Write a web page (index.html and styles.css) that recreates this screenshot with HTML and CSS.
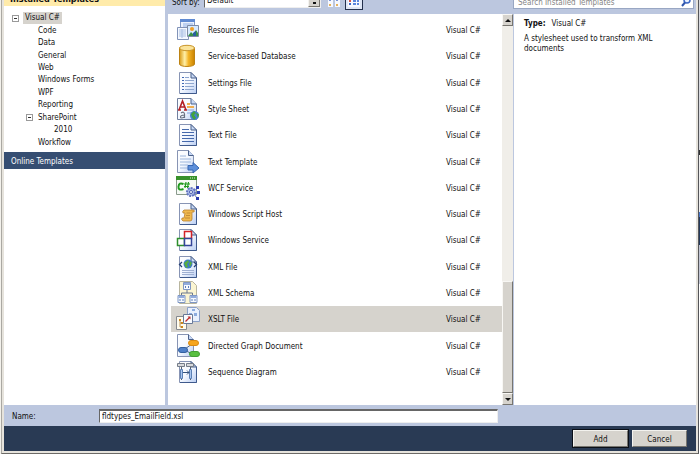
FILE: index.html
```html
<!DOCTYPE html>
<html lang="en">
<head>
<meta charset="utf-8">
<title>Add New Item</title>
<link rel="stylesheet" href="styles.css">
</head>
<body>
<svg class="defs" aria-hidden="true">
  <defs>
    <linearGradient id="paper" x1="0" y1="0" x2="1" y2="1"><stop offset="0" stop-color="#fff"/><stop offset=".5" stop-color="#f4f8ff"/><stop offset="1" stop-color="#b9cdf2"/></linearGradient>
    <linearGradient id="gold" x1="0" x2="1"><stop offset="0" stop-color="#d99a16"/><stop offset=".35" stop-color="#fff0a8"/><stop offset=".6" stop-color="#f3b428"/><stop offset="1" stop-color="#c98200"/></linearGradient>
    <symbol id="doc" viewBox="0 0 24 24"><path d="M3.5 1.5H15L20.500 7V22.500H3.500Z" fill="url(#paper)" stroke="#8794b4"/><path d="M20.500 7V22.500H4" fill="none" stroke="#3f5a8c"/><path d="M15 1.500V7h5.500Z" fill="#c7d8f5" stroke="#4a6089"/></symbol>
    <symbol id="node" viewBox="0 0 8 8"><path d="M.5.500h7v7h-7z" fill="#f7faff" stroke="#7f97c4"/><path d="M1 1h6v2H1z" fill="#92acdc"/><path d="M3 4 2 5l1 1M5 4l1 1-1 1" fill="none" stroke="#365fa8" stroke-width=".8"/></symbol>
  </defs>
</svg>
<div class="window">
  <div class="dialog">
    <main class="panes">
      <nav class="side">
        <h2 class="side-head">Installed Templates</h2>
        <ul class="tree">
          <li class="root"><button class="toggle" aria-label="Collapse Visual C#"></button><span class="picked">Visual C#</span></li>
          <li>Code</li><li>Data</li><li>General</li><li>Web</li><li>Windows Forms</li><li>WPF</li><li>Reporting</li>
          <li class="branch"><button class="toggle" aria-label="Collapse SharePoint"></button>SharePoint</li>
          <li class="deep">2010</li><li>Workflow</li>
        </ul>
        <a class="online" href="#">Online Templates</a>
      </nav>
      <section class="center">
        <div class="toolbar">
          <label for="sort">Sort by:</label>
          <span class="combo"><select id="sort"><option>Default</option></select><span class="combo-arrow"></span></span>
          <button class="view" aria-label="Small icons"><svg viewBox="0 0 12 12"><g fill="#f6f8ff"><path d="M0 0h5v11H0zM7 0h5v11H7z"/></g><path d="M1 3h2v2H1zM8 3h2v2H8z" fill="#7a96d8"/><path d="M1 8h2v2H1zM8 8h2v2H8z" fill="#e4b15b"/></svg></button>
          <button class="view on" aria-label="Medium icons"><svg viewBox="0 0 12 12"><path d="M0 0h12v11H0z" fill="#f6f8ff"/><path d="M1 1h2v2H1zM1 7h2v2H1z" fill="#3e66c4"/><path d="M1 4h2v2H1z" fill="#d8554a"/><path d="M5 1h3v2H5zM9 1h2v2H9zM5 4h3v2H5zM9 4h2v2H9zM5 7h3v2H5zM9 7h2v2H9z" fill="#5b86dc"/></svg></button>
        </div>
        <div class="list-wrap">
          <ul class="list">
            <li><svg viewBox="0 0 24 24"><path d="M4.500 1.500h14v12h-14z" fill="#eaf1fd" stroke="#7f97c4"/><path d="M4 1h15v3H4z" fill="#5f8ad2"/><path d="M7 6h10M7 8h10" stroke="#8fb0e6"/><path d="M1.500 9.500h11v12h-11z" fill="#f4f8ff" stroke="#8193b8"/><path d="M3 12h7M3 14h7M3 16h7M3 18h7M6 11v9" stroke="#a9bfe3"/><path d="M11.500 7.500h11v11h-11z" fill="#d6eaff" stroke="#7d8ba5"/><circle cx="16" cy="11" r="2" fill="#f1a025"/><path d="m12 18 3-4 2 2 3-4 2 3v3z" fill="#3a9144"/><path d="M17 18v-3l3-2v5z" fill="#295f9f"/></svg><span>Resources File</span><span>Visual C#</span></li>
            <li><svg viewBox="0 0 24 24"><path d="M3.500 4v16c0 3.300 15 3.300 15 0V4z" fill="url(#gold)" stroke="#bd8313"/><ellipse cx="11" cy="4" rx="7.500" ry="2.700" fill="#fbe49a" stroke="#c9952a"/></svg><span>Service-based Database</span><span>Visual C#</span></li>
            <li><svg viewBox="0 0 24 24"><use href="#doc"/><path d="M6 6.500h2M6 9.500h2M6 12.500h2M6 15.500h2M6 18.500h2" stroke="#3f68b4"/><path d="M9 6.500h4M9 9.500h9M9 12.500h9M9 15.500h9M9 18.500h9" stroke="#8ea6cf"/></svg><span>Settings File</span><span>Visual C#</span></li>
            <li><svg viewBox="0 0 24 24"><path d="M1.500 1.500H15L20.500 7V22.500h-19z" fill="url(#paper)" stroke="#71809f"/><path d="M15 1.500V7h5.500" fill="#c7d8f5" stroke="#4a6089"/><path d="M11 7h3M11 10h7" stroke="#efae51" stroke-width="2"/><path d="M11 13h7M11 16h5" stroke="#81a5df"/><path d="m3 13 3.500-9L10 13M4.500 10h4M2 13h3M8 13h3" fill="none" stroke="#b32025" stroke-width="1.600"/><path d="M5 16q3-2 3.500 1v4M8.500 18q-4 0-4 2t4 0" fill="none" stroke="#6a7181" stroke-width="1.200"/><circle cx="18.500" cy="18.500" r="4.500" fill="#4382d0"/><path d="m15 17 3-3 2 2-2 2 2 3-2 2-2-3zM20 16l3 1-1 4z" fill="#42a33d"/></svg><span>Style Sheet</span><span>Visual C#</span></li>
            <li><svg viewBox="0 0 24 24"><use href="#doc"/><path d="M6 6.500h7M6 9.500h12M6 12.500h12M6 15.500h12M6 18.500h12" stroke="#4569ac"/></svg><span>Text File</span><span>Visual C#</span></li>
            <li><svg viewBox="0 0 24 24"><path d="M1.500.500h11l5 5v17h-16z" fill="url(#paper)" stroke="#8794b4"/><path d="M12.500.500v5h5" fill="#c7d8f5" stroke="#4a6089"/><path d="M4 6h6M4 9h11M4 12h11M4 15h8M4 18h8" stroke="#9cb6dc"/><path d="M12 15.500h5v-3l6 5.500-6 5v-3h-5z" fill="#5d8fda" stroke="#3767b3"/></svg><span>Text Template</span><span>Visual C#</span></li>
            <li><svg viewBox="0 0 24 24"><path d="M.5 1.500h20v17H.5z" fill="#f6faf5" stroke="#8a9a8c"/><path d="M0 0h21v4H0z" fill="#38912b"/><path d="M14 2h1M16 2h1M18 2h1" stroke="#d6f1d2"/><path d="M7.500 8Q3 6 2.500 10.500T7.500 13" fill="none" stroke="#209a1e" stroke-width="2"/><path d="m10 6-1 6M12.500 6l-1 6M8 8h6M8 10.500h5" stroke="#209a1e" stroke-width="1.200"/><circle cx="15" cy="16" r="4" fill="#a8b9e8" stroke="#6475c0" stroke-width="2" stroke-dasharray="2 1"/><circle cx="15" cy="16" r="1.500" fill="#fff" stroke="#4c5fae"/><path d="m18 15 4-3M19 17h4M18 18l3 4" stroke="#6475c0"/><path d="M20 10h3v3h-3zM21 15h3v3h-3zM20 21h3v3h-3z" fill="#2b3cae"/></svg><span>WCF Service</span><span>Visual C#</span></li>
            <li><svg viewBox="0 0 24 24"><use href="#doc"/><path d="M8 8h9q2 0 1 2h-2v7q0 2-2 2H7q-2-1-1-3h2l1-5H7q-1-2 1-3z" fill="#f0b94e" stroke="#b98231" stroke-width=".8"/><path d="M10.500 11h4M10 13.500h4M9 16h5" stroke="#b98231" stroke-width=".8"/></svg><span>Windows Script Host</span><span>Visual C#</span></li>
            <li><svg viewBox="0 0 24 24"><use href="#doc"/><path d="M8.500 3.500h7v7h-7z" fill="#fff" stroke="#d32227" stroke-width="1.500"/><path d="M1.500 10.500h7v7h-7z" fill="#fff" stroke="#2e8f2c" stroke-width="1.500"/><path d="M8.500 10.500h7v7h-7z" fill="#fff" stroke="#34459a" stroke-width="1.500"/></svg><span>Windows Service</span><span>Visual C#</span></li>
            <li><svg viewBox="0 0 24 24"><use href="#doc"/><circle cx="12" cy="9" r="4.500" fill="#3c79ca"/><path d="m8 8 4-3 1 2-2 2 1 3-2 1zM14 6l2 2-2 4-1-2z" fill="#57ad42"/><path d="M6 7 3.500 9.500 6 12M18 7l2.500 2.500L18 12" fill="none" stroke="#263f73" stroke-width="1.300"/><path d="M6 15.500h12M6 17.500h12M6 19.500h12" stroke="#9fb0d2"/></svg><span>XML File</span><span>Visual C#</span></li>
            <li><svg viewBox="0 0 24 24"><path d="M3.500.500h13l4 4v18h-17z" fill="#fbf5d2" stroke="#b8b59f"/><path d="M11 8v4M5.500 15v-3h11v3" fill="none" stroke="#6b788f"/><use href="#node" x="7" y="1" width="8" height="8"/><use href="#node" x="1" y="14" width="9" height="8"/><use href="#node" x="13" y="14" width="9" height="8"/></svg><span>XML Schema</span><span>Visual C#</span></li>
            <li class="selected"><svg viewBox="0 0 24 24"><path d="M11.500.500h9l3 3v11h-12z" fill="#e9f0fd" stroke="#8ba0c8"/><path d="M13 6h3v3h-3zM18 6h3v3h-3zM16 2h3v2h-3z" fill="#8cabde"/><path d="M.5 9.500h10v13H.5z" fill="#fffbed" stroke="#85888f"/><path d="M3 12h2v2H3zM5 15h2v2H5zM5 19h2v2H5z" fill="#d78a17"/><path d="M4 13v7h2M4 16h2" fill="none" stroke="#a97930" stroke-width=".8"/><path d="M7.500 7.500h9v9h-9z" fill="#f9fbff" stroke="#697997"/><path d="m9.500 14.500 4-4" stroke="#bd2b2b" stroke-width="1.300"/><path d="M11.500 9.500h3v3z" fill="#bd2b2b"/></svg><span>XSLT File</span><span>Visual C#</span></li>
            <li><svg viewBox="0 0 24 24"><path d="M1.500.500h11l5 5v17h-16z" fill="url(#paper)" stroke="#8794b4"/><path d="M12.500.500v5h5" fill="#c7d8f5" stroke="#4a6089"/><path d="m9 15 7-5M10 17l7 3" stroke="#49658f"/><rect x="2.500" y="13.500" width="9" height="5" rx="2.500" fill="#4f80c8" stroke="#33609f"/><rect x="12.500" y="6.500" width="10" height="5" rx="2.500" fill="#f6a51e" stroke="#d98a12"/><rect x="13.500" y="17.500" width="10" height="5" rx="2.500" fill="#58bf40" stroke="#43a034"/></svg><span>Directed Graph Document</span><span>Visual C#</span></li>
            <li><svg viewBox="0 0 24 24"><use href="#doc"/><path d="M1.500 3.500h7v3h-7zM10.500 3.500h7v3h-7z" fill="#d8d9dc" stroke="#757d89"/><path d="M5.500 7v13M14.500 7v13" stroke="#56606f"/><path d="M4.500 9.500h2v9h-2zM13.500 9.500h2v9h-2z" fill="#a9c6ef" stroke="#5b80b5"/><path d="M7 12.500h6m-2-2 2 2-2 2" fill="none" stroke="#34527e"/></svg><span>Sequence Diagram</span><span>Visual C#</span></li>
          </ul>
          <div class="scroll"><button class="up" aria-label="Scroll up"></button><div class="track"></div><div class="thumb"></div><button class="down" aria-label="Scroll down"></button></div>
        </div>
      </section>
      <aside class="info">
        <div class="search"><input type="text" aria-label="Search" placeholder="Search Installed Templates"><svg viewBox="0 0 10 12"><circle cx="6" cy="4" r="3" fill="#e8f1ff" stroke="#3c67c3" stroke-width="1.500"/><path d="M4 6.500 1 10" stroke="#2e55ad" stroke-width="2"/></svg></div>
        <div class="details">
          <p><b>Type:</b><span>Visual C#</span></p>
          <p>A stylesheet used to transform XML documents</p>
        </div>
      </aside>
    </main>
    <div class="name-row"><label for="name">Name:</label><input id="name" type="text" value="fldtypes_EmailField.xsl"></div>
    <footer class="actions"><button class="default">Add</button><button>Cancel</button></footer>
  </div>
  <div class="behind"></div>
</div>
</body>
</html>
```

FILE: styles.css
```css
* { box-sizing: border-box; }
body {
  margin: 0;
  color: #111;
  font: 8px/12px "DejaVu Sans Condensed", "DejaVu Sans", sans-serif;
}
button, input, select { font: inherit; color: inherit; margin: 0; border-radius: 0; }
ul, p, h2 { margin: 0; padding: 0; list-style: none; }
.defs { position: absolute; width: 0; height: 0; }

.window { display: flex; height: 100vh; overflow: hidden; background: #f3f1eb; }
.dialog {
  flex: 1;
  display: flex;
  flex-direction: column;
  margin-left: 1px;
  border-left: 1px solid #aaa8a2;
  border-right: 1px solid #55565a;
  border-bottom: 1px solid #6c6a66;
  padding: 0 2px 2px;
  background: #e6e3dc;
}
.behind {
  width: 1px;
  background: linear-gradient(#d8dae0 0 150px, #333 150px 155px, #eee 155px 212px, #4a78c8 212px 217px, #253a5c 217px 245px, #c2c6d4 245px 284px, #fff 284px);
}
.panes { flex: 1; display: flex; min-height: 0; background: #bcc7df; }

.side { width: 161px; background: #fff; }
.side-head {
  display: flex;
  align-items: flex-end;
  height: 6px;
  padding: 0 6px 2px;
  background: #ffebaa;
  font-size: 9px;
  line-height: 10px;
}
.tree { display: grid; grid-auto-rows: 1fr; height: 137px; margin: 6px 0 3px; }
.tree li { display: flex; align-items: center; padding-left: 34px; }
.tree .root { padding-left: 8px; gap: 4px; }
.tree .branch { padding-left: 22px; gap: 5px; }
.tree .deep { padding-left: 50px; }
.picked { padding: 0 2px; background: #d6d3cd; }
.toggle {
  width: 7px;
  height: 7px;
  padding: 0;
  border: 1px solid #9a9a9a;
  background: linear-gradient(#333, #333) center / 3px 1px no-repeat #fff;
}
.online {
  display: block;
  padding: 4px 7px 1px;
  background: #364e72;
  color: #fff;
  text-decoration: none;
}

.center { flex: 1; display: flex; flex-direction: column; padding-left: 3px; }
.toolbar { display: flex; align-items: flex-end; height: 14px; padding: 0 0 4px 4px; }
.toolbar label { width: 32px; padding-bottom: 1px; }
.combo { display: flex; width: 117px; height: 14px; margin-bottom: 2px; border: 1px solid #666; border-right-color: #eee; border-bottom-color: #eee; background: #fff; }
.combo select { flex: 1; padding: 0 2px; border: 0; appearance: none; background: none; }
.combo-arrow { width: 12px; border: 1px solid #f4f3ef; border-right-color: #77756f; border-bottom-color: #77756f; background: linear-gradient(#111, #111) center 6px / 3px 2px no-repeat #d6d3cd; }
.view { width: 18px; height: 16px; margin-left: 5px; padding: 1px 2px; border: 0; background: none; }
.view svg { display: block; width: 12px; height: 12px; }
.view.on { margin-left: 1px; border: 1px solid #23304c; background: #dfe6f5; }

.list-wrap { flex: 1; display: flex; background: #fff; }
.list { flex: 1; display: grid; grid-auto-rows: 1fr; height: 368px; margin: 3px 0 0 3px; }
.list li { display: grid; grid-template-columns: 24px 1fr 56px; column-gap: 8px; align-items: center; padding-left: 5px; }
.list span { padding-top: 2px; }
.list svg { width: 24px; height: 24px; }
.list .selected { background: #d6d3cd; }

.scroll { width: 11px; display: flex; flex-direction: column; background: #f0eee9; }
.track { flex: 256; }
.up, .down, .thumb { border: 1px solid #f8f7f4; border-right-color: #77756f; border-bottom-color: #77756f; background: #d6d3cd; }
.thumb { flex: 111; }
.up, .down { display: grid; place-items: center; height: 12px; padding: 0; }
.up::before, .down::before { content: ""; border: 3px solid transparent; border-top-width: 0; border-bottom: 3px solid #111; }
.down::before { transform: rotate(180deg); }

.info { width: 183px; }
.search { display: flex; align-items: flex-end; height: 14px; padding-bottom: 5px; }
.search svg { flex: none; width: 10px; height: 12px; margin: 0 3px 1px -13px; }
.search input { width: 181px; height: 15px; padding: 2px 16px 0 4px; border: 1px solid #99a7c3; background: #fff; }
.search input::placeholder { color: #858585; opacity: 1; }
.details { height: calc(100% - 14px); padding: 5px 30px 0 10px; border-left: 1px solid #bcc7df; background: #fff; }
.details p { line-height: 10px; margin-bottom: 5px; }
.details span { margin-left: 6px; }

.name-row { display: flex; align-items: center; height: 21px; padding-left: 8px; background: #bcc7df; }
.name-row label { width: 87px; padding-top: 2px; }
.name-row input { width: 399px; height: 14px; padding: 0 2px; border: 1px solid #eee; border-top: 2px solid #666; border-left: 1px solid #666; background: #fff; }
.actions { display: flex; justify-content: flex-end; gap: 4px; padding: 4px 9px 4px 0; background: #293a54; }
.actions button { width: 55px; height: 17px; padding: 2px 0 0; border: 1px solid #f3f2ee; border-right-color: #77756f; border-bottom-color: #77756f; background: #d6d3cd; }
.actions .default { outline: 1px solid #0a0f18; }
```
